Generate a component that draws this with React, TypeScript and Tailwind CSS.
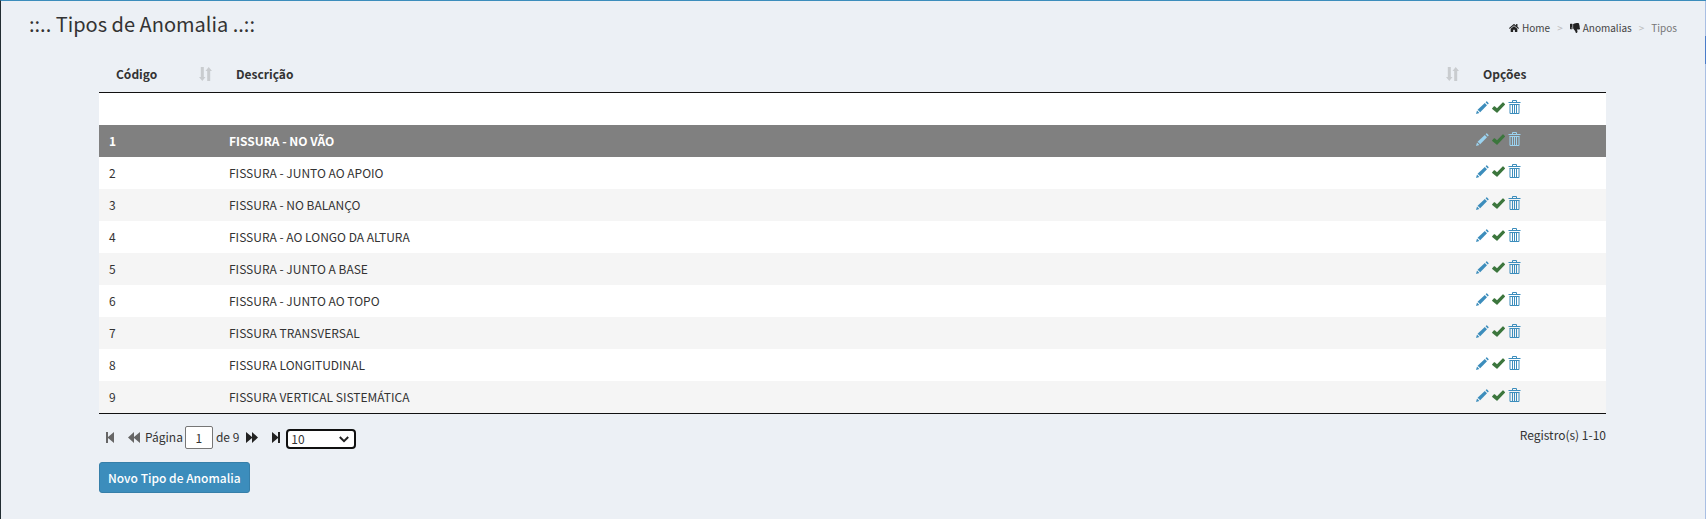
import { useState } from "react";
import { FaHome, FaThumbsDown } from "react-icons/fa";

type Row = { code: string; description: string };

const initialRows: Row[] = [
  { code: "", description: "" },
  { code: "1", description: "FISSURA - NO VÃO" },
  { code: "2", description: "FISSURA - JUNTO AO APOIO" },
  { code: "3", description: "FISSURA - NO BALANÇO" },
  { code: "4", description: "FISSURA - AO LONGO DA ALTURA" },
  { code: "5", description: "FISSURA - JUNTO A BASE" },
  { code: "6", description: "FISSURA - JUNTO AO TOPO" },
  { code: "7", description: "FISSURA TRANSVERSAL" },
  { code: "8", description: "FISSURA LONGITUDINAL" },
  { code: "9", description: "FISSURA VERTICAL SISTEMÁTICA" },
];

function PencilIcon() {
  return (
    <svg viewBox="0 0 13 13" className="h-[13px] w-[13px] fill-current" aria-hidden="true">
      <path d="M0 13 1 9.6 3.4 12Z" />
      <path d="M1.6 8.8 8.8 2 11 4.2 4.2 11.3Z" />
      <path d="M9.6 1.2 10.3.5Q10.7.1 11.1.5L12.5 1.9Q12.9 2.3 12.5 2.7L11.8 3.4Z" />
    </svg>
  );
}

function CheckIcon() {
  return (
    <svg viewBox="0 0 13 11" className="mt-px h-[11px] w-[13px] fill-current" aria-hidden="true">
      <path d="M.2 6.2 2 4.3Q2.4 4 2.8 4.3L5 6.2 10.6.4Q11 0 11.4.4L12.9 1.9Q13.2 2.3 12.9 2.7L5.5 10.5Q5 11 4.5 10.5L.2 7Q-.1 6.6.2 6.2Z" />
    </svg>
  );
}

function TrashIcon() {
  return (
    <svg viewBox="0 0 13 14" className="h-[14px] w-[13px] fill-none stroke-current" aria-hidden="true">
      <path d="M4.5 2V.5H8.5V2M.5 2.5H12.5M1.5 4.5H11.5M2 4.5V13.5H11V4.5" />
      <path d="M4.5 5V13M6.5 5V13M8.5 5V13" />
    </svg>
  );
}

function SortIcon() {
  return (
    <svg viewBox="0 0 13 14" className="h-[14px] w-[13px] fill-[#c9cccf]" aria-hidden="true">
      <path d="M1.8 0H4.8V10H6.5L3.3 14 0 10H1.8Z" />
      <path d="M8.2 14H11.2V4H13L9.7 0 6.5 4H8.2Z" />
    </svg>
  );
}

function FirstIcon() {
  return (
    <svg viewBox="0 0 8 11" className="h-[11px] w-2 fill-current" aria-hidden="true">
      <path d="M0 0H2V5L8 0V11L2 6V11H0Z" />
    </svg>
  );
}

function BackIcon() {
  return (
    <svg viewBox="0 0 12 11" className="h-[11px] w-3 fill-current" aria-hidden="true">
      <path d="M6 0V5L12 0V11L6 6V11L0 5.5Z" />
    </svg>
  );
}

function SortHeader({ children }: { children: string }) {
  return (
    <button type="button" className="flex w-full items-center justify-between pl-[17px] pr-[7px] font-bold">
      {children}
      <SortIcon />
    </button>
  );
}

export default function App() {
  const [selected, setSelected] = useState(1);
  const [page, setPage] = useState("1");

  return (
    <div className="flex min-h-screen border-l border-t border-l-[#222d32] border-t-[#3c8dbc] bg-[#ecf0f5] font-['Source_Sans_Pro','Noto_Sans_CJK_SC',sans-serif] text-[12px] leading-5 text-[#333]">
      <div className="min-w-0 flex-1">
        <header className="flex items-start justify-between px-7 pt-2">
          <h1 className="text-[20px] leading-[30px]">::.. Tipos de Anomalia ..::</h1>
          <nav aria-label="Navegação" className="pt-[9px]">
            <ol className="flex items-center text-[10px] text-[#444]">
              <li>
                <a href="#home" className="flex items-center gap-[3px]">
                  <FaHome className="text-[10px] text-[#222]" />
                  Home
                </a>
              </li>
              <li aria-hidden="true" className="px-[7px] text-[10px] text-[#bbb]">&gt;</li>
              <li>
                <a href="#anomalias" className="flex items-center gap-[3px]">
                  <FaThumbsDown className="text-[10px] text-[#222]" />
                  Anomalias
                </a>
              </li>
              <li aria-hidden="true" className="px-[7px] text-[10px] text-[#bbb]">&gt;</li>
              <li className="text-[#777]">Tipos</li>
            </ol>
          </nav>
        </header>

        <main className="pl-[98px] pr-[99px] pt-4">
          <table className="w-full table-fixed border-separate border-spacing-0 text-left">
            <colgroup>
              <col className="w-[120px]" />
              <col />
              <col className="w-[140px]" />
            </colgroup>
            <thead>
              <tr className="h-[38px]">
                <th className="border-b border-[#111] p-0">
                  <SortHeader>Código</SortHeader>
                </th>
                <th className="border-b border-[#111] p-0">
                  <SortHeader>Descrição</SortHeader>
                </th>
                <th className="border-b border-[#111] p-0 pl-[17px]">Opções</th>
              </tr>
            </thead>
            <tbody>
              {initialRows.map((row, i) => {
                const active = i === selected;
                return (
                  <tr
                    key={i}
                    onClick={() => setSelected(i)}
                    className={
                      active
                        ? "h-8 bg-[#808080] font-bold text-white"
                        : i % 2
                          ? "h-8 bg-[#f5f5f5]"
                          : "h-8 bg-white"
                    }
                  >
                    <td className="py-0 pb-px pl-2.5">{row.code}</td>
                    <td className="py-0 pb-px pl-2.5">{row.description}</td>
                    <td className="py-0 pb-1 pl-2.5">
                      <div className={active ? "flex items-center gap-[3px] text-[#9bd3f0]" : "flex items-center gap-[3px] text-[#3c8dbc]"}>
                        <button type="button" aria-label="Editar">
                          <PencilIcon />
                        </button>
                        <button type="button" aria-label="Ativar" className="text-[#3c763d]">
                          <CheckIcon />
                        </button>
                        <button type="button" aria-label="Excluir">
                          <TrashIcon />
                        </button>
                      </div>
                    </td>
                  </tr>
                );
              })}
            </tbody>
          </table>

          <div className="flex items-start justify-between border-t border-[#111] pt-[11px]">
            <div className="flex h-6 items-center">
              <button type="button" aria-label="Primeira página" className="ml-[7px] text-[#666]">
                <FirstIcon />
              </button>
              <button type="button" aria-label="Página anterior" className="ml-3.5 text-[#666]">
                <BackIcon />
              </button>
              <label htmlFor="page" className="ml-[5px]">Página</label>
              <input
                id="page"
                value={page}
                onChange={(e) => setPage(e.target.value)}
                className="ml-0.5 h-[23px] w-7 rounded-[2px] border border-[#767676] bg-white text-center"
              />
              <span className="ml-[3px]">de 9</span>
              <button type="button" aria-label="Próxima página" className="ml-[7px] rotate-180 text-[#222]">
                <BackIcon />
              </button>
              <button type="button" aria-label="Última página" className="ml-3.5 rotate-180 text-[#222]">
                <FirstIcon />
              </button>
              <div className="ml-1.5 mt-1 grid items-center">
                <select
                  aria-label="Registros por página"
                  defaultValue="10"
                  className="col-start-1 row-start-1 h-5 w-[70px] appearance-none rounded-[4px] border-2 border-[#101010] bg-white pl-[3px] leading-4"
                >
                  <option>10</option>
                  <option>20</option>
                  <option>30</option>
                </select>
                <svg
                  viewBox="0 0 10 7"
                  className="pointer-events-none col-start-1 row-start-1 mr-[7px] h-[7px] w-2.5 justify-self-end fill-none stroke-[#222] stroke-2"
                  aria-hidden="true"
                >
                  <path d="M.8 1 5 5.2 9.2 1" />
                </svg>
              </div>
            </div>
            <span>Registro(s) 1-10</span>
          </div>

          <button
            type="button"
            className="mt-[13px] h-[31px] rounded-[3px] border border-[#367fa9] bg-[#3c8dbc] px-2 font-medium text-white"
          >
            Novo Tipo de Anomalia
          </button>
        </main>
      </div>
      <div className="w-px bg-[#a9bfe3] pt-[35px]">
        <div className="h-7 bg-[#4a7cc9]" />
      </div>
    </div>
  );
}
